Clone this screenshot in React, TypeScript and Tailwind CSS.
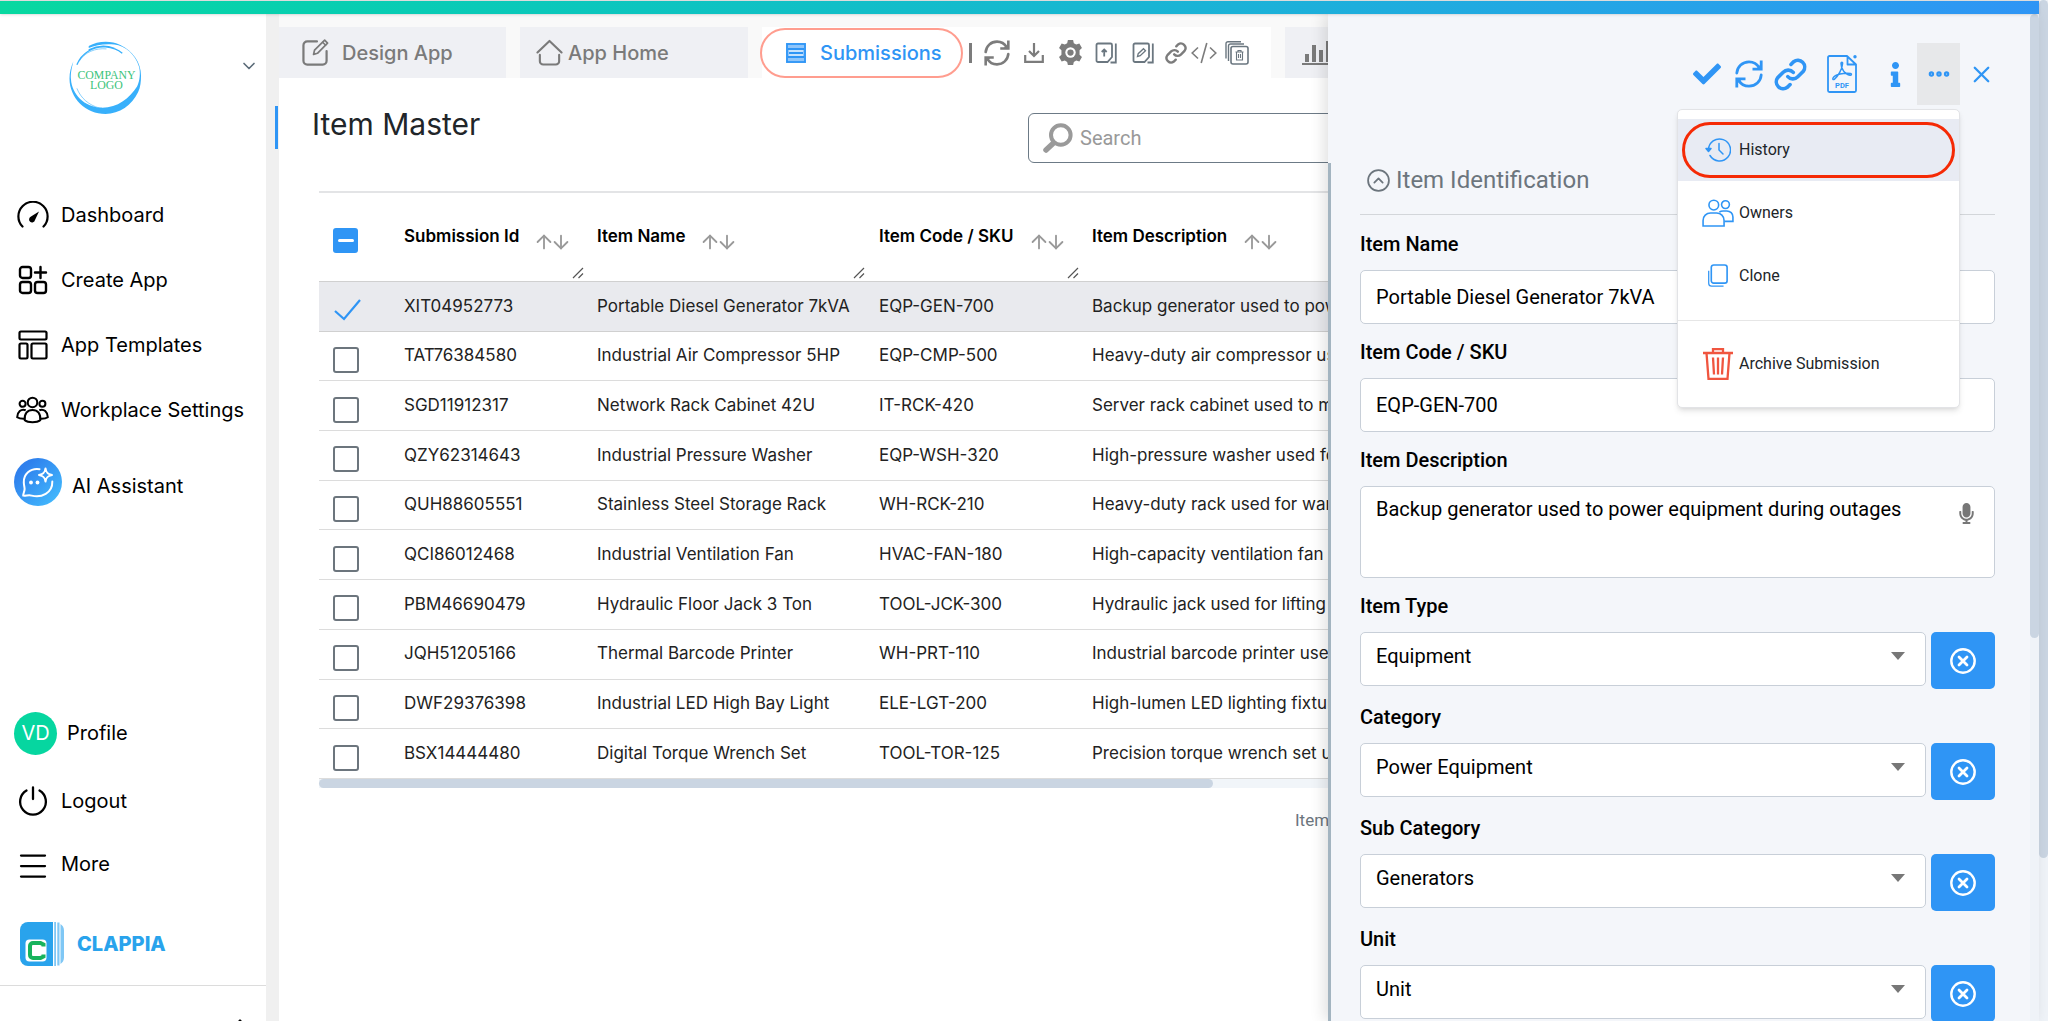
import React from 'react';
import { ArrowDown, ArrowUp, ChevronDown, ChevronUp, CircleChevronUp, Ellipsis, Menu, X } from 'lucide-react';
import { FaCheck, FaInfo, FaMicrophone } from 'react-icons/fa';

interface IconProps {
  className?: string;
}

interface Submission {
  id: string;
  name: string;
  code: string;
  description: string;
}

const submissions: Submission[] = [
  { id: 'XIT04952773', name: 'Portable Diesel Generator 7kVA', code: 'EQP-GEN-700', description: 'Backup generator used to power' },
  { id: 'TAT76384580', name: 'Industrial Air Compressor 5HP', code: 'EQP-CMP-500', description: 'Heavy-duty air compressor used' },
  { id: 'SGD11912317', name: 'Network Rack Cabinet 42U', code: 'IT-RCK-420', description: 'Server rack cabinet used to mount' },
  { id: 'QZY62314643', name: 'Industrial Pressure Washer', code: 'EQP-WSH-320', description: 'High-pressure washer used for' },
  { id: 'QUH88605551', name: 'Stainless Steel Storage Rack', code: 'WH-RCK-210', description: 'Heavy-duty rack used for warehouse' },
  { id: 'QCI86012468', name: 'Industrial Ventilation Fan', code: 'HVAC-FAN-180', description: 'High-capacity ventilation fan' },
  { id: 'PBM46690479', name: 'Hydraulic Floor Jack 3 Ton', code: 'TOOL-JCK-300', description: 'Hydraulic jack used for lifting' },
  { id: 'JQH51205166', name: 'Thermal Barcode Printer', code: 'WH-PRT-110', description: 'Industrial barcode printer used' },
  { id: 'DWF29376398', name: 'Industrial LED High Bay Light', code: 'ELE-LGT-200', description: 'High-lumen LED lighting fixture' },
  { id: 'BSX14444480', name: 'Digital Torque Wrench Set', code: 'TOOL-TOR-125', description: 'Precision torque wrench set used' },
];

const columns = ['Submission Id', 'Item Name', 'Item Code / SKU', 'Item Description'];

const DashboardIcon: React.FC<IconProps> = ({ className }) => (
  <svg viewBox="0 0 32 28" className={className} fill="none" stroke="currentColor" strokeWidth="2.2" strokeLinecap="round">
    <path d="M5.5 25.5A14.6 14.6 0 1 1 26.5 25.5" />
    <path d="M22 10.5 18 19A3 3 0 1 1 14 15.6Z" fill="currentColor" stroke="none" />
  </svg>
);

const CreateIcon: React.FC<IconProps> = ({ className }) => (
  <svg viewBox="0 0 30 30" className={className} fill="none" stroke="currentColor" strokeWidth="2.4" strokeLinecap="round">
    <rect x="2" y="2" width="11" height="11" rx="2.6" />
    <rect x="2" y="17" width="11" height="11" rx="2.6" />
    <rect x="17" y="17" width="11" height="11" rx="2.6" />
    <path d="M22.5 2v11M17 7.5h11" />
  </svg>
);

const TemplatesIcon: React.FC<IconProps> = ({ className }) => (
  <svg viewBox="0 0 30 30" className={className} fill="none" stroke="currentColor" strokeWidth="2.2">
    <rect x="1.5" y="1.5" width="27" height="8" rx="1.4" />
    <rect x="1.5" y="13.5" width="8" height="15" rx="1.4" />
    <rect x="13.5" y="13.5" width="15" height="15" rx="1.4" />
  </svg>
);

const PeopleIcon: React.FC<IconProps> = ({ className }) => (
  <svg viewBox="0 0 34 28" className={className} fill="none" stroke="currentColor" strokeWidth="2.1" strokeLinejoin="round">
    <circle cx="17" cy="6.2" r="4.9" />
    <circle cx="6.8" cy="7.6" r="3.1" />
    <circle cx="27.2" cy="7.6" r="3.1" />
    <path d="M9 24.5c-.6-6.5 2.6-10.5 8-10.5s8.6 4 8 10.5c-3.5 2.7-12.500 2.700-16 0Z" />
    <path d="M10 14.3c-4.800-2-8.600 1.700-8.800 7.200 1.800 1.300 4.500 1.700 7.500 1.600M24 14.300c4.800-2 8.600 1.700 8.800 7.200-1.800 1.300-4.500 1.700-7.500 1.600" />
  </svg>
);

const AssistantIcon: React.FC<IconProps> = ({ className }) => (
  <svg viewBox="0 0 48 48" className={className} fill="none">
    <defs>
      <linearGradient id="assistantFill" x1="0" y1="0" x2="1" y2="1">
        <stop offset="0.2" stopColor="#2f80ed" />
        <stop offset="1" stopColor="#45c1ff" />
      </linearGradient>
    </defs>
    <circle cx="24" cy="24" r="24" fill="url(#assistantFill)" />
    <g stroke="#fff" strokeWidth="2" strokeLinejoin="round" strokeLinecap="round">
      <path d="M25.5 11.2C16 9.8 9.5 16.5 9.800 24.500c.1 3 .8 4.500.8 6.500 0 2.500-1.500 4.500-1.400 6.600 3 .3 5.500-.8 8.500 0 9.500 2.600 21-2.500 20.600-14" />
      <path d="M31.500 10.500c.6 4 2 5.500 6.500 6.500-4.500 1-5.900 2.500-6.500 6.500-.6-4-2-5.500-6.500-6.500 4.500-1 5.900-2.500 6.500-6.500Z" />
    </g>
    <circle cx="17" cy="24.5" r="1.9" fill="#fff" />
    <circle cx="23.5" cy="24.5" r="1.9" fill="#fff" />
  </svg>
);

const PowerIcon: React.FC<IconProps> = ({ className }) => (
  <svg viewBox="0 0 30 30" className={className} fill="none" stroke="currentColor" strokeWidth="2.3" strokeLinecap="round">
    <path d="M15 1.500V13M8.500 4.500a12.900 12.900 0 1 0 13 0" />
  </svg>
);

const RefreshIcon: React.FC<IconProps> = ({ className }) => (
  <svg viewBox="0 0 28 28" className={className} fill="none" stroke="currentColor" strokeWidth="2.8">
    <path d="M1.800 13C2.300 6.500 7.500 1.800 14 1.800c4.500 0 8.300 2.400 10.300 6M26.200 15c-.5 6.500-5.700 11.200-12.200 11.200-4.500 0-8.300-2.400-10.300-6" strokeLinecap="round" />
    <path d="M26.200 .5v8.700h-8.700M1.800 27.500v-8.700h8.700" />
    <path d="M26 4v5h-5ZM2 24v-5h5Z" fill="currentColor" stroke="none" />
  </svg>
);

const ChainIcon: React.FC<IconProps> = ({ className }) => (
  <svg viewBox="0 0 24 24" className={className} fill="none" stroke="currentColor" strokeWidth="2.6" strokeLinecap="round">
    <path d="M10 13.500a5 5 0 0 0 7.300.2l4-4a5 5 0 0 0-7-7l-2 2" />
    <path d="M14 10.500a5 5 0 0 0-7.300-.2l-4 4a5 5 0 0 0 7 7l2-2" />
  </svg>
);

const DesignIcon: React.FC<IconProps> = ({ className }) => (
  <svg viewBox="0 0 28 28" className={className} fill="none" stroke="currentColor" strokeWidth="2.3" strokeLinecap="round" strokeLinejoin="round">
    <path d="M15.500 2.500H5.500a4 4 0 0 0-4 4v16a4 4 0 0 0 4 4h16a4 4 0 0 0 4-4v-10" />
    <path d="M12 16l1-4.500L23.500 1.200l3 3L16 14.800Z" strokeWidth="1.800" />
    <path d="M21.500 3.500l3 3" strokeWidth="1.500" />
  </svg>
);

const HomeIcon: React.FC<IconProps> = ({ className }) => (
  <svg viewBox="0 0 28 28" className={className} fill="none" stroke="currentColor" strokeWidth="2.2" strokeLinecap="round" strokeLinejoin="round">
    <path d="M1.500 14 14 2l12.500 12" />
    <path d="M4 16.500v6.500a3.500 3.500 0 0 0 3.500 3.500h13a3.500 3.500 0 0 0 3.500-3.500v-6.500" />
  </svg>
);

const ListIcon: React.FC<IconProps> = ({ className }) => (
  <svg viewBox="0 0 20 20" className={className} fill="none" stroke="currentColor">
    <rect x="0" y="0" width="20" height="20" fill="#8fc5fa" stroke="none" />
    <rect x="1" y="1" width="18" height="18" strokeWidth="1.800" />
    <path d="M2 6h16M2 14h16" strokeWidth="2" />
    <path d="M3 10h14" strokeWidth="2" />
    <path d="M3 8h14M3 12h14" stroke="#fff" strokeWidth="1" />
  </svg>
);

const DownloadIcon: React.FC<IconProps> = ({ className }) => (
  <svg viewBox="0 0 20 20" className={className} fill="none" stroke="currentColor" strokeWidth="2.2">
    <path d="M1.200 12v6.800h17.600V12M10 0v13M5 8l5 5 5-5" />
  </svg>
);

const GearIcon: React.FC<IconProps> = ({ className }) => (
  <svg viewBox="0 0 24 24" className={className} fill="currentColor">
    <path d="M9.500 0h5l.7 3 2.300 1.300 3-1 2.500 4.400-2.300 2.100v4.400l2.300 2.100-2.500 4.400-3-1-2.300 1.300-.7 3h-5l-.7-3-2.300-1.300-3 1L1 16.300l2.300-2.100V9.800L1 7.700l2.500-4.400 3 1L8.800 3Z" />
    <circle cx="12" cy="12" r="5" fill="#fff" />
    <circle cx="12" cy="12" r="3" />
  </svg>
);

const PageIcon: React.FC<IconProps & { children?: React.ReactNode }> = ({ className, children }) => (
  <svg viewBox="0 0 22 22" className={className} fill="none" stroke="currentColor" strokeWidth="1.8">
    <path d="M3 1.500h12.500a1.500 1.500 0 0 1 1.500 1.500v12l-4.500 5H3a1.500 1.500 0 0 1-1.500-1.500V3A1.500 1.500 0 0 1 3 1.500Z" />
    <path d="M20.800 1.500V20.500H15.500" />
    {children}
  </svg>
);

const CodeIcon: React.FC<IconProps> = ({ className }) => (
  <svg viewBox="0 0 26 22" className={className} fill="none" stroke="currentColor" strokeWidth="1.6">
    <path d="M7 5.500 1.200 11 7 16.500M19 5.500 24.800 11 19 16.500M15.800 1 10.200 21" />
  </svg>
);

const BulkDeleteIcon: React.FC<IconProps> = ({ className }) => (
  <svg viewBox="0 0 24 24" className={className} fill="none" stroke="currentColor" strokeWidth="1.6">
    <rect x="6" y="5.500" width="17" height="17.500" rx="2" />
    <path d="M3.500 20V5a2 2 0 0 1 2-2H19M1 17.500V2.700a2 2 0 0 1 2-2H16" strokeWidth="1.400" />
    <path d="M10.500 11h8M13 10.800V9.500h3v1.300M11.500 11.500v7.500h6v-7.500M13.500 13v4M15.500 13v4" strokeWidth="1.100" />
  </svg>
);

const PdfIcon: React.FC<IconProps> = ({ className }) => (
  <svg viewBox="0 0 30 38" className={className} fill="none" stroke="currentColor" strokeWidth="1.8" strokeLinejoin="round">
    <path d="M20 1H2.500A1.500 1.500 0 0 0 1 2.500v33A1.500 1.500 0 0 0 2.500 37h25a1.500 1.500 0 0 0 1.500-1.500V9.500ZM20.500 1.500v8H29" />
    <path d="M6 23c2-3.500 11-5.500 17.500-4.500 1.500.3 1 2-.5 1.800-5-.8-9-6.500-9-11.800 0-1.800 1.700-1.800 1.600 0C15.300 14 11 21.500 7.300 24.300 6.200 25 5.400 24.200 6 23Z" strokeWidth="1.500" />
    <circle cx="28" cy="1.800" r="1.700" fill="currentColor" stroke="none" />
    <text x="15" y="32.500" textAnchor="middle" fontSize="7.500" fontWeight="700" fontFamily="Roboto, sans-serif" fill="currentColor" stroke="none">PDF</text>
  </svg>
);

const HistoryIcon: React.FC<IconProps> = ({ className }) => (
  <svg viewBox="0 0 26 24" className={className} fill="none" stroke="currentColor" strokeWidth="1.5" strokeLinecap="round" strokeLinejoin="round">
    <path d="M3.500 12A11 11 0 1 1 5 17.500" />
    <path d="M1 10.500 3.500 13.500 6 10.500Z" fill="currentColor" />
    <path d="M14 5.500V12l4 4" />
  </svg>
);

const OwnersIcon: React.FC<IconProps> = ({ className }) => (
  <svg viewBox="0 0 34 30" className={className} fill="none" stroke="currentColor" strokeWidth="1.7">
    <circle cx="12.500" cy="6.500" r="5.200" />
    <circle cx="25" cy="6" r="4.200" />
    <path d="M1 29v-6c0-4.500 3.500-8 8-8h6.500c4.500 0 8 3.500 8 8v6Z" />
    <path d="M18.500 14c1-.8 2.300-1.200 4-1.200h4c3.700 0 6.500 2.800 6.500 6.500V24h-9" />
  </svg>
);

const CloneIcon: React.FC<IconProps> = ({ className }) => (
  <svg viewBox="0 0 22 24" className={className} fill="none" stroke="currentColor" strokeWidth="1.7">
    <rect x="4" y="1" width="16.500" height="19" rx="2.500" />
    <path d="M1.300 7v13a3 3 0 0 0 3 3h12.500" strokeWidth="1.300" />
  </svg>
);

const ArchiveIcon: React.FC<IconProps> = ({ className }) => (
  <svg viewBox="0 0 30 32" className={className} fill="none" stroke="currentColor" strokeWidth="2.3">
    <path d="M0 5h30M10 4.500V1.200h10v3.300M3.500 5l2 25.800h19l2-25.800" />
    <path d="M10 9.500l1 17M15 9.500v17M20 9.500l-1 17" />
  </svg>
);

const CompanyLogo: React.FC<IconProps> = ({ className }) => (
  <svg viewBox="0 0 74 74" className={className}>
    <path fill="#38b0fb" fillRule="evenodd" d="M20 5C29 0 42-1 52 4c13 6 21 18 21 31 0 6-.5 12-3 17-6 13-19 22-33 22C17 74 .5 58 .5 38 .5 32 2 26 4.500 20.500 2.500 28 1.500 33 2 39c1 15 14 28 30 28.500 16 .8 29-9 37-21.500 3-6 3.500-14 2-20C67 13 57 5 46 3.500 36 2.500 27 4 20 7Z" />
    <path fill="none" stroke="#38b0fb" strokeWidth="1.400" d="M8 24C13 12 25 5 37 6c7 .5 13 3 17 6.500M20 9c9-4.500 18-4.500 26-1.500" />
    <path fill="none" stroke="#38b0fb" strokeWidth=".6" d="M8 48c4 10 12 17 23 20M10 21C16 11 27 7 38 8" />
    <g fill="#3cc47c" fontFamily="'Liberation Serif', serif" fontSize="12" textAnchor="middle">
      <text x="38" y="38.500">COMPANY</text>
      <text x="38" y="48.500">LOGO</text>
    </g>
  </svg>
);

const ClappiaLogo: React.FC<IconProps> = ({ className }) => (
  <svg viewBox="0 0 44 44" className={className}>
    <path fill="#29a3ec" d="M8 0h25v44H8a8 8 0 0 1-8-8V8a8 8 0 0 1 8-8Z" />
    <path fill="#7fc7f5" d="M34.200 0h1.800v44h-1.800ZM37.300.5h2.200v43h-2.200ZM40.500 2c2 1.300 3.500 3.500 3.500 6.500v27c0 3-1.500 5.200-3.500 6.500Z" />
    <rect x="5.500" y="17.500" width="21" height="22" rx="4" fill="#fff" />
    <path fill="none" stroke="#17b35c" strokeWidth="4" d="M23.500 24.500V22.500L20.500 21h-7.500a3 3 0 0 0-3 3v9a3 3 0 0 0 3 3h7.500l3-1.500V32.500" />
  </svg>
);

const sideLinks = [
  { label: 'Dashboard', icon: <DashboardIcon className="h-7 w-8" /> },
  { label: 'Create App', icon: <CreateIcon className="h-[30px] w-[30px]" /> },
  { label: 'App Templates', icon: <TemplatesIcon className="h-[30px] w-[30px]" /> },
  { label: 'Workplace Settings', icon: <PeopleIcon className="h-7 w-[34px]" /> },
];

const Sidebar: React.FC = () => (
  <nav className="flex w-[266px] shrink-0 flex-col bg-white text-xl text-black">
    <div className="flex h-[168px] items-start justify-between pt-[26px] pr-[7px] pl-[69px]">
      <CompanyLogo className="h-[75px] w-[73px]" />
      <button type="button" aria-label="Switch workplace" className="mt-4">
        <ChevronDown size={20} className="text-[#5b6b78]" />
      </button>
    </div>
    {sideLinks.map((link) => (
      <a key={link.label} href="#" className="flex h-[65px] items-center gap-3">
        <span className="ml-4 flex w-[33px] shrink-0 justify-center">{link.icon}</span>
        {link.label}
      </a>
    ))}
    <a href="#" className="flex h-20 items-center gap-[10px] pl-[14px]">
      <AssistantIcon className="h-12 w-12" />
      <span className="pt-2">AI Assistant</span>
    </a>
    <a href="#" className="mt-auto flex h-[70px] items-center gap-[10px] pl-[14px]">
      <span className="flex h-[43px] w-[43px] items-center justify-center rounded-full bg-[#06d6a0] text-white">VD</span>
      Profile
    </a>
    <a href="#" className="flex h-[66px] items-center gap-3">
      <span className="ml-4 flex w-[33px] justify-center"><PowerIcon className="h-[30px] w-[30px]" /></span>
      Logout
    </a>
    <a href="#" className="flex h-[60px] items-center gap-3">
      <span className="ml-4 flex w-[33px] justify-center"><Menu size={36} strokeWidth={1.5} className="mt-1 shrink-0" /></span>
      More
    </a>
    <a href="#" className="flex h-[92px] items-center gap-[13px] border-b border-[#dcdcdc] pt-2 pl-5 text-xl font-extrabold text-[#29a3ec]">
      <ClappiaLogo className="h-11 w-11" />
      CLAPPIA
    </a>
    <div className="flex h-[35px] shrink-0 items-start justify-end overflow-hidden pt-7 pr-[18px]">
      <ChevronUp size={16} className="shrink-0" />
    </div>
  </nav>
);

const Toolbar: React.FC = () => (
  <div className="flex items-center text-[#7c7c7c]">
    <span className="ml-[6px] h-5 w-[3px] bg-[#7c7c7c]" />
    <button type="button" aria-label="Refresh" className="ml-3"><RefreshIcon className="h-[26px] w-[26px]" /></button>
    <button type="button" aria-label="Download" className="ml-[14px]"><DownloadIcon className="h-5 w-5" /></button>
    <button type="button" aria-label="Settings" className="ml-[14px]"><GearIcon className="h-[25px] w-[25px]" /></button>
    <button type="button" aria-label="Bulk upload" className="ml-3 text-[#6b7780]">
      <PageIcon className="h-[22px] w-[22px]"><path d="M9.200 14.500V7.500M6.700 10l2.500-2.500 2.500 2.500" /></PageIcon>
    </button>
    <button type="button" aria-label="Bulk edit" className="ml-[15px] text-[#6b7780]">
      <PageIcon className="h-[22px] w-[22px]"><path d="M5.500 14.500l.7-2.800 5.300-5 2 2-5.300 5Z" strokeWidth="1.300" /></PageIcon>
    </button>
    <button type="button" aria-label="Copy link" className="ml-[11px]"><ChainIcon className="h-[22px] w-[22px]" /></button>
    <button type="button" aria-label="Embed" className="ml-1"><CodeIcon className="h-[22px] w-[26px]" /></button>
    <button type="button" aria-label="Bulk delete" className="ml-2 text-[#6b7780]"><BulkDeleteIcon className="h-6 w-6" /></button>
  </div>
);

const Tabs: React.FC = () => (
  <div className="flex h-16 shrink-0 items-end gap-[14px] bg-[#f9f9f9] text-xl font-medium text-[#7a7a7a]">
    <a href="#" className="flex h-[51px] w-[227px] shrink-0 items-center gap-[13px] bg-[#eff0f4] pl-[23px]">
      <DesignIcon className="h-[27px] w-[27px]" />
      Design App
    </a>
    <a href="#" className="flex h-[51px] w-[228px] shrink-0 items-center gap-[5px] bg-[#eff0f4] pl-4">
      <HomeIcon className="h-[27px] w-[27px]" />
      App Home
    </a>
    <div className="flex h-[51px] w-[509px] shrink-0 items-center bg-white">
      <a href="#" className="-ml-[2px] flex h-[50px] w-[203px] items-center gap-[14px] rounded-full border-2 border-[#ff9d8f] pl-6 text-[#2f95f5]">
        <ListIcon className="h-5 w-5" />
        Submissions
      </a>
      <Toolbar />
    </div>
    <a href="#" aria-label="Analytics" className="flex h-[51px] w-[228px] shrink-0 items-center bg-[#eff0f4] pl-[17px]">
      <svg viewBox="0 0 32 26" className="h-[26px] w-8" fill="currentColor">
        <path d="M0 23h32v2H0ZM3 14h4v8H3ZM10 5h4v17h-4ZM17 10h4v12h-4ZM24 1h4v21h-4Z" />
      </svg>
    </a>
  </div>
);

const SubmissionTable: React.FC = () => (
  <table className="h-[588px] w-[1180px] shrink-0 table-fixed border-collapse border-t-2 border-[#e3e4e6] text-left text-[17px]">
    <colgroup>
      <col className="w-[71px]" />
      <col className="w-[193px]" />
      <col className="w-[282px]" />
      <col className="w-[213px]" />
      <col />
    </colgroup>
    <thead>
      <tr className="border-b border-[#d0d0d0]">
        <th className="pl-[14px]">
          <button type="button" aria-label="Clear selection" className="mt-[6px] flex h-[25px] w-[25px] items-center justify-center rounded-[3px] bg-[#2f95f5]">
            <span className="h-[3px] w-4 rounded-full bg-white" />
          </button>
        </th>
        {columns.map((column) => (
          <th key={column} className="pl-[14px] font-semibold text-black">
            <div className="flex h-[88px] items-center justify-between">
              <span className="flex items-center gap-[14px] whitespace-nowrap">
                {column}
                <span className="flex pt-[10px] text-[#999]">
                  <ArrowUp size={22} />
                  <ArrowDown size={22} className="-ml-[5px]" />
                </span>
              </span>
              {column !== 'Item Description' && (
                <svg viewBox="0 0 12 12" className="mb-[2px] h-3 w-3 shrink-0 self-end" stroke="#555" strokeWidth="1.200">
                  <path d="M1 11 11 1M6.500 11 11 6.500" />
                </svg>
              )}
            </div>
          </th>
        ))}
      </tr>
    </thead>
    <tbody className="text-[#222]">
      {submissions.map((row, index) => (
        <tr key={row.id} className={index === 0 ? 'border-b border-[#d0d0d0] bg-[#e9eaee]' : 'border-b border-[#dcdcdc]'}>
          <td className="pt-2 pl-[14px]">
            {index === 0 ? (
              <button type="button" aria-label="Deselect row" className="flex h-[26px] items-center">
                <svg viewBox="0 0 28 22" className="h-[22px] w-7" fill="none" stroke="#2f95f5" strokeWidth="2.2">
                  <path d="M2 12 11 20 27 1" />
                </svg>
              </button>
            ) : (
              <input type="checkbox" aria-label={`Select ${row.id}`} className="block h-[26px] w-[26px] appearance-none rounded-[3px] border-2 border-[#6c757d]" />
            )}
          </td>
          <td className="pl-[14px] whitespace-nowrap">{row.id}</td>
          <td className="pl-[14px] whitespace-nowrap">{row.name}</td>
          <td className="pl-[14px] whitespace-nowrap">{row.code}</td>
          <td className="pl-[14px] whitespace-nowrap">{row.description}</td>
        </tr>
      ))}
    </tbody>
  </table>
);

const inputClass = 'w-full rounded-[5px] border border-[#c8cfd8] bg-white px-[15px] text-xl text-black';
const labelClass = 'mb-3 text-xl leading-7 font-medium text-black';

const TextField: React.FC<{ id: string; label: string; value: string }> = ({ id, label, value }) => (
  <div className="flex flex-col">
    <label htmlFor={id} className={labelClass}>{label}</label>
    <input id={id} type="text" defaultValue={value} className={`${inputClass} h-[54px]`} />
  </div>
);

const SelectField: React.FC<{ id: string; label: string; value: string }> = ({ id, label, value }) => (
  <div className="flex flex-col">
    <label htmlFor={id} className={labelClass}>{label}</label>
    <div className="flex items-start gap-[5px]">
      <div className="relative flex-1">
        <select id={id} defaultValue={value} className={`${inputClass} h-[54px] appearance-none pb-[7px] text-[#212529]`}>
          <option>{value}</option>
        </select>
        <svg viewBox="0 0 14 8" className="pointer-events-none absolute top-5 right-[21px] h-2 w-[14px]" fill="#777">
          <path d="M0 0h14L7 8Z" />
        </svg>
      </div>
      <button type="button" aria-label={`Clear ${label}`} className="flex h-[57px] w-16 items-center justify-center rounded-[5px] bg-[#2f95f5] text-white">
        <svg viewBox="0 0 26 26" className="h-[26px] w-[26px]" fill="none" stroke="currentColor" strokeWidth="2.4" strokeLinecap="round">
          <circle cx="13" cy="13" r="11.700" />
          <path d="M9 9l8 8M17 9l-8 8" strokeWidth="2.800" />
        </svg>
      </button>
    </div>
  </div>
);

const menuItems = [
  { label: 'Owners', icon: <OwnersIcon className="h-7 w-[34px]" /> },
  { label: 'Clone', icon: <CloneIcon className="h-[23px] w-[22px]" /> },
];

const ActionMenu: React.FC = () => (
  <div className="absolute top-full right-0 z-20 mt-1 flex w-[283px] flex-col rounded-[5px] border border-[#e2e3e6] bg-white pt-[9px] text-base text-[#212529] shadow-md">
    <button type="button" className="flex h-[62px] items-center bg-[#e8ebf3] px-1">
      <span className="flex h-14 w-full items-center gap-2 rounded-[28px] border-3 border-[#f52a05] pl-5">
        <HistoryIcon className="h-6 w-[26px] text-[#2f95f5]" />
        History
      </span>
    </button>
    {menuItems.map((item) => (
      <button type="button" key={item.label} className="flex h-[63px] items-center gap-1 pl-[22px]">
        <span className="flex w-[35px] justify-center text-[#2f95f5]">{item.icon}</span>
        {item.label}
      </button>
    ))}
    <button type="button" className="mt-[13px] flex h-[87px] items-center gap-1 border-t border-[#e6e6e6] pl-[22px]">
      <span className="flex w-[35px] justify-center text-[#f0553f]"><ArchiveIcon className="h-8 w-[30px]" /></span>
      Archive Submission
    </button>
  </div>
);

const DetailPanel: React.FC = () => (
  <aside className="relative z-5 flex w-[711px] shrink-0 shadow-[-4px_0_14px_rgba(0,0,0,0.12)]" style={{ fontFamily: 'Roboto, sans-serif' }}>
    <div className="flex w-[3px] flex-col bg-[#f4f6fa] pt-[149px]">
      <div className="flex-1 bg-[#a3b4c0]" />
    </div>
    <div className="flex flex-1 flex-col overflow-hidden bg-[#f4f6fa] pr-[35px] pl-[29px]">
      <div className="flex h-[106px] shrink-0 items-center justify-end pt-[14px] text-[#2f95f5]">
        <button type="button" aria-label="Save"><FaCheck size={28} /></button>
        <button type="button" aria-label="Refresh" className="ml-[14px]"><RefreshIcon className="h-7 w-7" /></button>
        <button type="button" aria-label="Copy link" className="ml-[11px]"><ChainIcon className="h-[33px] w-[33px]" /></button>
        <button type="button" aria-label="Print PDF" className="ml-5"><PdfIcon className="h-[38px] w-[30px]" /></button>
        <button type="button" aria-label="Info" className="ml-[26px]"><FaInfo size={25} /></button>
        <div className="relative ml-[9px]">
          <button type="button" aria-label="More actions" className="flex h-[62px] w-[43px] items-center justify-center bg-[#e7e8ea]">
            <Ellipsis size={26} strokeWidth={3} />
          </button>
          <ActionMenu />
        </div>
        <button type="button" aria-label="Close" className="ml-2"><X size={27} /></button>
      </div>
      <button type="button" className="mt-[30px] flex h-[65px] shrink-0 items-center gap-[5px] border-b border-[#d3d6da] pb-1 pl-[6px] text-2xl text-[#6c757d]">
        <CircleChevronUp size={25} strokeWidth={1.7} />
        Item Identification
      </button>
      <div className="mt-[15px] flex flex-col gap-[14px]">
        <TextField id="item-name" label="Item Name" value="Portable Diesel Generator 7kVA" />
        <TextField id="item-code" label="Item Code / SKU" value="EQP-GEN-700" />
        <div className="flex flex-col">
          <label htmlFor="item-description" className={labelClass}>Item Description</label>
          <div className="relative">
            <textarea id="item-description" defaultValue="Backup generator used to power equipment during outages" className={`${inputClass} block h-[92px] resize-none py-2 pr-16`} />
            <FaMicrophone size={21} className="absolute top-[17px] right-[18px] text-[#777]" />
          </div>
        </div>
        <SelectField id="item-type" label="Item Type" value="Equipment" />
        <SelectField id="category" label="Category" value="Power Equipment" />
        <SelectField id="sub-category" label="Sub Category" value="Generators" />
        <SelectField id="unit" label="Unit" value="Unit" />
      </div>
    </div>
    <div className="flex w-[9px] flex-col bg-[#eff3f8]">
      <div className="h-[62%] rounded-full bg-[#cad5e2]" />
    </div>
  </aside>
);

const App: React.FC = () => (
  <div className="flex h-screen overflow-hidden bg-white" style={{ fontFamily: 'Inter, sans-serif' }}>
    <div className="flex min-w-0 flex-1 flex-col">
      <div className="relative z-10 h-[14px] shrink-0 border-t border-[#dcdcdc] bg-gradient-to-r from-[#08d8a0] to-[#2f95f5] shadow-sm" />
      <div className="flex min-h-0 flex-1">
        <Sidebar />
        <div className="w-[13px] shrink-0 bg-[#f0f0f0] pt-[92px]">
          <div className="ml-[9px] h-[43px] w-[3px] bg-[#2f95f5]" />
        </div>
        <main className="flex min-w-0 flex-1 flex-col overflow-hidden">
          <Tabs />
          <div className="flex h-[113px] shrink-0 items-start justify-between pl-[33px]">
            <h1 className="pt-6 text-[30px] leading-[44px] text-[#212529]">Item Master</h1>
            {/* runs on under the detail panel */}
            <div className="mt-[35px] -mr-2 flex h-[50px] w-[308px] items-center gap-[7px] rounded-md border border-[#6c7a86] pl-[14px]">
              <svg viewBox="0 0 30 30" className="h-[30px] w-[30px] shrink-0" fill="none" stroke="#9a9a9a" strokeLinecap="round">
                <circle cx="17.800" cy="12" r="9.800" strokeWidth="4" />
                <path d="M10 20.500 3 27" strokeWidth="5.500" />
              </svg>
              <input type="search" aria-label="Search" placeholder="Search" className="min-w-0 flex-1 text-xl outline-none placeholder:text-[#999]" style={{ fontFamily: 'Roboto, sans-serif' }} />
            </div>
          </div>
          <div className="pl-10">
            <SubmissionTable />
            <div className="h-[9px] bg-[#f1f5f9]">
              <div className="h-[9px] w-[894px] rounded-full bg-[#cad5e2]" />
            </div>
            <p className="pt-5 pl-[976px] text-[17px] whitespace-nowrap text-[#6c757d]" style={{ fontFamily: 'Roboto, sans-serif' }}>Items</p>
          </div>
        </main>
        <DetailPanel />
      </div>
    </div>
    <div className="flex w-[9px] shrink-0 flex-col bg-[#eff3f8]">
      <div className="h-[84%] rounded-full bg-[#cad5e2]" />
    </div>
  </div>
);

export default App;
